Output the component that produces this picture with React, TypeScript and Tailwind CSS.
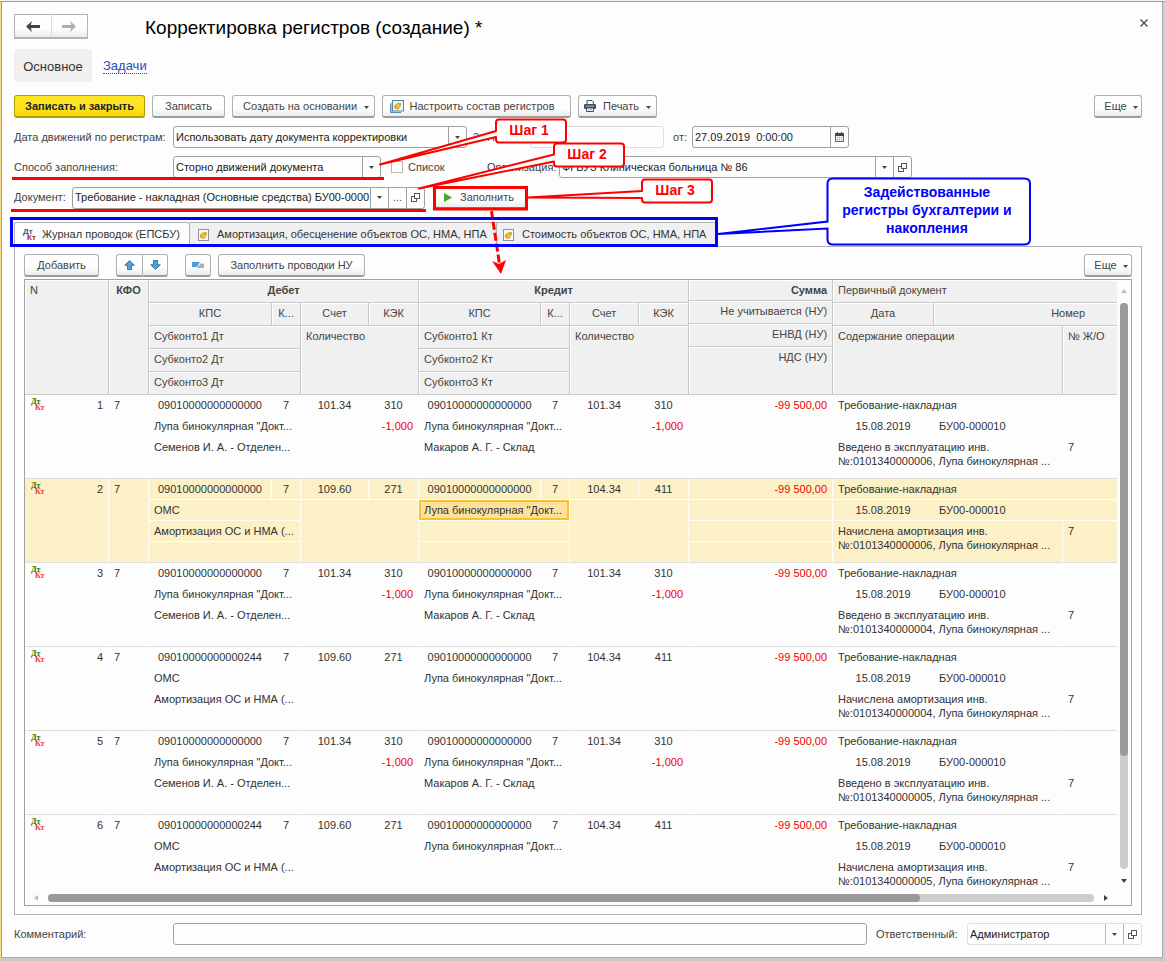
import React from "react";

type Entry = {
  n: number;
  debit: { kps: string; account: string; kek: string; sub: string[]; qty?: string };
  credit: { kps: string; account: string; kek: string; sub: string[]; qty?: string };
  content: string[];
};

const LUPA = 'Лупа бинокулярная "Докт...';

function commissioning(n: number, inv: string): Entry {
  return {
    n,
    debit: { kps: "09010000000000000", account: "101.34", kek: "310", sub: [LUPA, "Семенов И. А. - Отделен..."], qty: "-1,000" },
    credit: { kps: "09010000000000000", account: "101.34", kek: "310", sub: [LUPA, "Макаров А. Г. - Склад"], qty: "-1,000" },
    content: ["Введено в эксплуатацию инв.", `№:${inv}, Лупа бинокулярная ...`],
  };
}

function depreciation(n: number, inv: string, kps: string): Entry {
  return {
    n,
    debit: { kps, account: "109.60", kek: "271", sub: ["ОМС", "Амортизация ОС и НМА (..."] },
    credit: { kps: "09010000000000000", account: "104.34", kek: "411", sub: [LUPA, ""] },
    content: ["Начислена амортизация инв.", `№:${inv}, Лупа бинокулярная ...`],
  };
}

const entries: Entry[] = [
  commissioning(1, "0101340000006"),
  depreciation(2, "0101340000006", "09010000000000000"),
  commissioning(3, "0101340000004"),
  depreciation(4, "0101340000004", "09010000000000244"),
  commissioning(5, "0101340000005"),
  depreciation(6, "0101340000005", "09010000000000244"),
];

function Caret({ className = "" }: { className?: string }) {
  return (
    <svg aria-hidden="true" viewBox="0 0 5 3" className={`h-[3px] w-[5px] shrink-0 ${className}`}>
      <path d="M0 0H5L2.5 3Z" fill="#444" />
    </svg>
  );
}

function OpenIcon() {
  return (
    <svg aria-hidden="true" viewBox="0 0 9 9" className="h-[9px] w-[9px]" fill="none" stroke="#555" shapeRendering="crispEdges">
      <path d="M3.5 .5H8.5V5.5H3.5Z" />
      <path d="M3 3.5H.5V8.5H5.5V6" />
    </svg>
  );
}

function CalendarIcon() {
  return (
    <svg aria-hidden="true" viewBox="0 0 9 10" className="h-[10px] w-[9px]" shapeRendering="crispEdges">
      <path d="M0 1H9V10H0Z" fill="#666" />
      <path d="M2 0H3V2H2ZM6 0H7V2H6Z" fill="#444" />
      <path d="M0 1H9V4H0Z" fill="#444" />
      <path d="M1 4H8V9H1Z" fill="#f2f2f2" />
      <path d="M2 5H3V6H2ZM4 5H5V6H4ZM6 5H7V6H6ZM2 7H3V8H2ZM4 7H5V8H4ZM6 7H7V8H6Z" fill="#999" />
    </svg>
  );
}

function RegisterIcon() {
  return (
    <svg aria-hidden="true" viewBox="0 0 11 12" className="h-3 w-[11px] shrink-0">
      <rect x=".5" y=".5" width="10" height="11" fill="#f6f8fc" stroke="#8a93a5" />
      <path d="M1.8 7.2C1.8 4.6 5.4 2.4 8.4 3C9.8 4.4 8.8 6.6 7.2 7.8C8 8.6 6.6 9.9 4.8 9.7C3 9.6 1.8 8.8 1.8 7.2Z" fill="#dfa51f" />
      <path d="M3.6 6.2L6.6 4.2M4.4 8.2L7.4 6.2" stroke="#fbe48a" strokeWidth=".9" />
    </svg>
  );
}

function RegistersIcon() {
  return (
    <svg aria-hidden="true" viewBox="0 0 14 13" className="h-[13px] w-[14px] shrink-0">
      <path d="M.5 3.5V12.5H11" fill="none" stroke="#5a8fb0" />
      <path d="M1 2.5H3V12H1Z" fill="#9cc7de" />
      <rect x="2.5" y=".5" width="11" height="10.5" fill="#eaf5fc" stroke="#4f87ab" />
      <path d="M4 7C4 4.6 7.4 2.2 10.6 2.8C12 4.2 11 6.4 9.4 7.6C10.2 8.4 8.6 9.6 7 9.4C5.2 9.4 4 8.6 4 7Z" fill="#dfa51f" />
      <path d="M6 6L9 4M6.6 8L9.6 6" stroke="#fbe48a" strokeWidth=".9" />
    </svg>
  );
}

function PrinterIcon() {
  return (
    <svg aria-hidden="true" viewBox="0 0 12 12" className="h-3 w-3 shrink-0">
      <path d="M3 .5H8L9.3 1.8V5H3Z" fill="#fff" stroke="#3d5068" />
      <rect x="0" y="4" width="12" height="5" rx="1.2" fill="#3d5068" />
      <path d="M2 6.2H10" stroke="#c7d2de" strokeWidth=".8" />
      <path d="M2.5 8H9.5V11.5H2.5Z" fill="#fff" stroke="#3d5068" />
      <path d="M4 9.8H8" stroke="#8b98a8" strokeWidth=".8" />
    </svg>
  );
}

function BlueArrow({ down = false }: { down?: boolean }) {
  return (
    <svg aria-hidden="true" viewBox="0 0 11 10" className={`h-[10px] w-[11px] ${down ? "rotate-180" : ""}`}>
      <path d="M5.5 .6L10.3 5.2H7.5V9.5H3.5V5.2H.7Z" fill="#4da3e0" stroke="#2a6da3" strokeWidth=".9" />
    </svg>
  );
}

function NavArrow({ color, right = false }: { color: string; right?: boolean }) {
  return (
    <svg aria-hidden="true" viewBox="0 0 14 11" className={`h-[11px] w-[14px] ${right ? "rotate-180" : ""}`}>
      <path d="M0 5.5L6 0L4.8 4H14V7H4.8L6 11Z" fill={color} />
    </svg>
  );
}

function DtKt({ tone }: { tone: "tab" | "row" }) {
  return (
    <span className={`relative block h-[14px] w-[13px] shrink-0 text-left text-[8px] leading-[8px] font-bold ${tone === "tab" ? "font-[Liberation_Sans,sans-serif]" : "font-[Liberation_Serif,serif]"}`}>
      <span className={`absolute top-0 left-0 ${tone === "tab" ? "text-[#2c6496]" : "text-[#1a7a10]"}`}>Дт</span>
      <span className={`absolute top-[6px] left-[4px] ${tone === "tab" ? "text-[#c22020]" : "text-[#f04040]"}`}>Кт</span>
    </span>
  );
}

const buttonLook =
  "flex h-[23px] shrink-0 items-center justify-center rounded-[3px] border border-[#b0b0b0] border-b-2 border-b-[#9c9c9c] bg-linear-to-b from-[#fefefe] from-60% to-[#ececec] text-[#444] whitespace-nowrap";

function Button({ className, children, label }: { className: string; children: React.ReactNode; label?: string }) {
  return (
    <button type="button" aria-label={label} className={`${buttonLook} ${className}`}>
      {children}
    </button>
  );
}

function SideButton({ label, children, light = false }: { label: string; children: React.ReactNode; light?: boolean }) {
  return (
    <button
      type="button"
      aria-label={label}
      className={`flex w-[18px] shrink-0 items-center justify-center border-l ${light ? "border-[#b8b8b8]" : "border-[#a0a0a0]"}`}
    >
      {children}
    </button>
  );
}

const fieldLook = "flex h-[22px] shrink-0 items-stretch overflow-hidden rounded-[3px] border bg-[#fefefe] text-[#222]";

function SelectField({ id, value, className }: { id: string; value: string; className: string }) {
  return (
    <div className={`${fieldLook} relative border-[#a0a0a0] ${className}`}>
      <select id={id} className="w-full appearance-none bg-transparent pr-5 pl-[2px] outline-none">
        <option>{value}</option>
      </select>
      <span className="pointer-events-none absolute inset-y-0 right-0 flex w-[18px] items-center justify-center border-l border-[#a0a0a0]">
        <Caret />
      </span>
    </div>
  );
}

const headCell = "border-l border-b border-[#c9c9c9] bg-[#f0f0f0] p-0 px-[5px] align-top leading-5 font-normal text-[#444] shadow-[inset_1px_1px_0_#fff]";
const sumLine = "pr-[5px] shadow-[inset_1px_1px_0_#fff]";

function EntryRows({ entry, selected }: { entry: Entry; selected: boolean }) {
  const inner = selected ? "border-[#fffdf5]" : "border-transparent";
  const last = "border-b-[#dedede]";
  const cell = `h-[21px] overflow-hidden border-l border-b p-0 px-[5px] align-top leading-5 whitespace-nowrap ${inner}`;
  const { debit, credit } = entry;
  const bg = selected ? "bg-[#fcf0c6]" : "";
  return (
    <>
      <tr className={bg}>
        <td rowSpan={4} className={`${cell} ${last} border-l-transparent`}>
          <div className="flex items-start justify-between">
            <span className="pt-[3px]">
              <DtKt tone="row" />
            </span>
            <span>{entry.n}</span>
          </div>
        </td>
        <td rowSpan={4} className={`${cell} ${last}`}>7</td>
        <td className={`${cell} text-center`}>{debit.kps}</td>
        <td className={`${cell} text-center`}>7</td>
        <td className={`${cell} text-center`}>{debit.account}</td>
        <td className={`${cell} text-center`}>{debit.kek}</td>
        <td className={`${cell} text-center`}>{credit.kps}</td>
        <td className={`${cell} text-center`}>7</td>
        <td className={`${cell} text-center`}>{credit.account}</td>
        <td className={`${cell} text-center`}>{credit.kek}</td>
        <td className={`${cell} text-right text-[#f00000]`}>-99 500,00</td>
        <td colSpan={3} className={cell}>Требование-накладная</td>
      </tr>
      <tr className={bg}>
        <td colSpan={2} className={cell}>{debit.sub[0]}</td>
        <td colSpan={2} rowSpan={3} className={`${cell} ${last} text-right text-[#f00000]`}>{debit.qty}</td>
        <td
          colSpan={2}
          className={`${cell} ${selected ? "bg-[#fde19c] shadow-[inset_0_0_0_2px_#fbc22d]" : ""}`}
        >
          {credit.sub[0]}
        </td>
        <td colSpan={2} rowSpan={3} className={`${cell} ${last} text-right text-[#f00000]`}>{credit.qty}</td>
        <td className={cell} />
        <td className={`${cell} text-center`}>15.08.2019</td>
        <td colSpan={2} className={`${cell} border-l-transparent`}>БУ00-000010</td>
      </tr>
      <tr className={bg}>
        <td colSpan={2} className={cell}>{debit.sub[1]}</td>
        <td colSpan={2} className={cell}>{credit.sub[1]}</td>
        <td className={cell} />
        <td colSpan={2} rowSpan={2} className={`${cell} ${last}`}>
          <div className="pt-[3px] leading-[14px]">
            {entry.content[0]}
            <br />
            {entry.content[1]}
          </div>
        </td>
        <td rowSpan={2} className={`${cell} ${last}`}>7</td>
      </tr>
      <tr className={bg}>
        <td colSpan={2} className={`${cell} ${last}`} />
        <td colSpan={2} className={`${cell} ${last}`} />
        <td className={`${cell} ${last}`} />
      </tr>
    </>
  );
}

function PostingsTable() {
  return (
    <table className="w-full table-fixed border-separate border-spacing-0 text-[#333]">
      <colgroup>
        <col className="w-[83px]" />
        <col className="w-[40px]" />
        <col className="w-[123px]" />
        <col className="w-[29px]" />
        <col className="w-[68px]" />
        <col className="w-[50px]" />
        <col className="w-[122px]" />
        <col className="w-[29px]" />
        <col className="w-[69px]" />
        <col className="w-[50px]" />
        <col className="w-[144px]" />
        <col className="w-[101px]" />
        <col />
        <col className="w-[55px]" />
      </colgroup>
      <thead>
        <tr className="h-[23px]">
          <th rowSpan={5} className={`${headCell} border-l-0 text-left`}>N</th>
          <th rowSpan={5} className={headCell}><b>КФО</b></th>
          <th colSpan={4} className={headCell}><b>Дебет</b></th>
          <th colSpan={4} className={headCell}><b>Кредит</b></th>
          <th rowSpan={5} className="border-b border-l border-[#c9c9c9] bg-[#f0f0f0] p-0 text-right align-top leading-5 font-normal text-[#444]">
            <div className={`h-[21px] border-b border-[#c9c9c9] ${sumLine}`}><b>Сумма</b></div>
            <div className={`h-[23px] border-b border-[#c9c9c9] ${sumLine}`}>Не учитывается (НУ)</div>
            <div className={`h-[23px] border-b border-[#c9c9c9] ${sumLine}`}>ЕНВД (НУ)</div>
            <div className={`h-[47px] ${sumLine}`}>НДС (НУ)</div>
          </th>
          <th colSpan={3} className={`${headCell} text-left`}>Первичный документ</th>
        </tr>
        <tr className="h-[23px]">
          <th className={headCell}>КПС</th>
          <th className={headCell}>К...</th>
          <th className={headCell}>Счет</th>
          <th className={headCell}>КЭК</th>
          <th className={headCell}>КПС</th>
          <th className={headCell}>К...</th>
          <th className={headCell}>Счет</th>
          <th className={headCell}>КЭК</th>
          <th className={headCell}>Дата</th>
          <th colSpan={2} className={`${headCell} pr-8 text-right`}>Номер</th>
        </tr>
        <tr className="h-[23px]">
          <th colSpan={2} className={`${headCell} text-left`}>Субконто1 Дт</th>
          <th colSpan={2} rowSpan={3} className={`${headCell} text-left`}>Количество</th>
          <th colSpan={2} className={`${headCell} text-left`}>Субконто1 Кт</th>
          <th colSpan={2} rowSpan={3} className={`${headCell} text-left`}>Количество</th>
          <th colSpan={2} rowSpan={3} className={`${headCell} text-left`}>Содержание операции</th>
          <th rowSpan={3} className={`${headCell} text-left whitespace-nowrap`}>№ Ж/О</th>
        </tr>
        <tr className="h-[23px]">
          <th colSpan={2} className={`${headCell} text-left`}>Субконто2 Дт</th>
          <th colSpan={2} className={`${headCell} text-left`}>Субконто2 Кт</th>
        </tr>
        <tr className="h-[23px]">
          <th colSpan={2} className={`${headCell} text-left`}>Субконто3 Дт</th>
          <th colSpan={2} className={`${headCell} text-left`}>Субконто3 Кт</th>
        </tr>
      </thead>
      <tbody>
        {entries.map((e) => (
          <EntryRows key={e.n} entry={e} selected={e.n === 2} />
        ))}
      </tbody>
    </table>
  );
}

function Annotations() {
  const step = "absolute flex h-6 w-[72px] items-center justify-center text-[14px] leading-none font-bold text-[#f00]";
  return (
    <div className="pointer-events-none absolute top-0 left-0 h-[280px] w-[1040px]">
      <svg aria-hidden="true" viewBox="0 0 1040 280" className="absolute top-0 left-0 h-[280px] w-[1040px]">
        <g fill="none" stroke="#f00" strokeWidth="3">
          <path d="M12 178.5H384M11 210.5H426" />
          <rect x="434.500" y="187.500" width="92" height="21.500" />
          <path d="M491.500 211L499.500 264" strokeDasharray="8 3" />
        </g>
        <path d="M501 274L492 261L499 264L506 260Z" fill="#f00" />
        <rect x="11.500" y="218.500" width="705" height="27" fill="none" stroke="#00f" strokeWidth="3" />
        <g fill="#fff" stroke="#f00" strokeWidth="2" strokeLinejoin="round">
          <path d="M499 119.500H563Q566 119.500 566 122.500V139.500Q566 142.500 563 142.500H499Q496 142.500 496 139.500V137L380 164.500L496 131V122.500Q496 119.500 499 119.500Z" />
          <path d="M557 143.500H621Q624 143.500 624 146.500V163.500Q624 166.500 621 166.500H557Q554 166.500 554 163.500V161.500L419 188.500L554 154.500V146.500Q554 143.500 557 143.500Z" />
          <path d="M645 179.500H709Q712 179.500 712 182.500V199.500Q712 202.500 709 202.500H645Q642 202.500 642 199.500V198L528 197.500L642 191V182.500Q642 179.500 645 179.500Z" />
        </g>
        <path
          d="M833 178.500H1024Q1030 178.500 1030 183.500V239.500Q1030 244.500 1024 244.500H833Q827.500 244.500 827.500 239.500V228.500L718 234L827.500 221.500V183.500Q827.500 178.500 833 178.500Z"
          fill="#fff"
          stroke="#00f"
          strokeWidth="2"
        />
      </svg>
      <div className={`${step} top-[118px] left-[493px]`}>Шаг 1</div>
      <div className={`${step} top-[142px] left-[551px]`}>Шаг 2</div>
      <div className={`${step} top-[178px] left-[639px]`}>Шаг 3</div>
      <div className="absolute top-[183px] left-[826px] w-[202px] text-center text-[14px] leading-[18px] font-bold text-[#00f]">
        Задействованные
        <br />
        регистры бухгалтерии и
        <br />
        накопления
      </div>
    </div>
  );
}

export default function App() {
  return (
    <div className="relative flex h-screen min-h-[640px] min-w-[1100px] flex-col overflow-hidden bg-[#fdfdfd] font-[Liberation_Sans,Arial,sans-serif] text-[11px] text-[#444]">
      <div className="flex h-[2px] shrink-0 border-b border-[#9a9a9a] bg-[#f2f2f2]" />
      <div className="flex min-h-0 flex-1">
        <div className="w-[2px] shrink-0 border-r border-[#b39b55] bg-[#fbdc8c]" />
        <main className="flex min-w-0 flex-1 flex-col border-r border-b border-[#a8a8a8] pt-3 pr-5 pb-3 pl-3">
          <header className="flex h-[25px] shrink-0 items-center">
            <div className="flex h-[25px] w-[74px] shrink-0 border border-b-2 border-[#b4b4b4] bg-linear-to-b from-[#fefefe] from-60% to-[#ececec]">
              <button type="button" aria-label="Назад" className="flex flex-1 items-center justify-center border-r border-[#dcdcdc]">
                <NavArrow color="#444" />
              </button>
              <button type="button" aria-label="Вперед" className="flex flex-1 items-center justify-center">
                <NavArrow color="#adadad" right />
              </button>
            </div>
            <h1 className="ml-[57px] pt-[2px] text-[19px] leading-6 text-black">Корректировка регистров (создание) *</h1>
            <button type="button" aria-label="Закрыть" className="-mr-[10px] mb-2 ml-auto flex h-4 w-4 items-center justify-center">
              <svg aria-hidden="true" viewBox="0 0 8 8" className="h-2 w-2" stroke="#444" strokeWidth="1.2">
                <path d="M.5 .5L7.500 7.500M7.500 .5L.5 7.500" />
              </svg>
            </button>
          </header>

          <nav className="mt-[10px] flex h-[33px] shrink-0 items-stretch gap-[11px] text-[13px]">
            <a href="#main" className="flex w-[78px] items-center justify-center rounded-[4px] bg-[#f0f0f0] pt-[2px] text-[#333]">Основное</a>
            <a href="#tasks" className="flex items-center pt-[2px] text-[#2250b8]">
              <span className="border-b border-dotted border-[#2250b8] leading-[14px]">Задачи</span>
            </a>
          </nav>

          <div className="mt-[13px] flex shrink-0 gap-[7px]">
            <button type="button" className="h-[23px] w-[131px] rounded-[3px] border border-b-2 border-[#b39c00] bg-linear-to-b from-[#ffe423] from-50% to-[#f5d800] font-bold whitespace-nowrap text-[#222]">
              Записать и закрыть
            </button>
            <Button className="w-[73px]">Записать</Button>
            <Button className="w-[143px] gap-[7px] pl-[5px]">Создать на основании<Caret className="mt-[3px]" /></Button>
            <Button className="w-[189px] gap-[6px] pr-[9px]"><RegistersIcon />Настроить состав регистров</Button>
            <Button className="w-[79px] gap-[7px]"><PrinterIcon />Печать<Caret className="mt-[3px]" /></Button>
            <Button className="ml-auto w-[48px] gap-[6px] pl-[6px]">Еще<Caret className="mt-[3px]" /></Button>
          </div>

          <div className="mt-2 flex shrink-0 items-center">
            <label htmlFor="date-mode" className="w-[159px] shrink-0">Дата движений по регистрам:</label>
            <SelectField id="date-mode" value="Использовать дату документа корректировки" className="w-[294px]" />
            <button type="button" aria-label="Подсказка" className="ml-[5px] w-2 text-[#2b7bb5]">?</button>
            <label htmlFor="number" className="ml-[7px] w-[43px]">Номер:</label>
            <input id="number" className="h-[22px] w-[134px] rounded-[3px] border border-[#dedede] bg-[#fefefe] px-[3px]" />
            <label htmlFor="date" className="ml-[9px] w-[19px]">от:</label>
            <div className={`${fieldLook} w-[157px] border-[#a0a0a0]`}>
              <input id="date" defaultValue="27.09.2019  0:00:00" className="min-w-0 flex-1 bg-transparent pl-[2px] whitespace-pre outline-none" />
              <SideButton label="Выбрать дату"><CalendarIcon /></SideButton>
            </div>
          </div>

          <div className="mt-2 flex shrink-0 items-center">
            <label htmlFor="fill-mode" className="w-[159px] shrink-0">Способ заполнения:</label>
            <SelectField id="fill-mode" value="Сторно движений документа" className="w-[208px]" />
            <input id="list" type="checkbox" className="ml-[10px] h-3 w-3 shrink-0 appearance-none border border-[#b8b8b8] bg-white checked:bg-[#555]" />
            <label htmlFor="list" className="ml-[5px] w-[79px]">Список</label>
            <label htmlFor="org" className="w-[72px]">Организация:</label>
            <div className={`${fieldLook} w-[353px] border-[#a0a0a0]`}>
              <input id="org" defaultValue="ФГБУЗ Клиническая больница № 86" className="min-w-0 flex-1 bg-transparent pl-[2px] outline-none" />
              <SideButton label="Выбрать организацию"><Caret /></SideButton>
              <SideButton label="Открыть организацию"><OpenIcon /></SideButton>
            </div>
          </div>

          <div className="mt-2 flex shrink-0 items-center">
            <label htmlFor="document" className="w-[58px] shrink-0">Документ:</label>
            <div className={`${fieldLook} w-[353px] border-[#a0a0a0]`}>
              <input id="document" defaultValue="Требование - накладная (Основные средства) БУ00-000010" className="min-w-0 flex-1 bg-transparent pl-[2px] outline-none" />
              <SideButton label="Показать список"><Caret /></SideButton>
              <SideButton label="Выбрать документ"><span className="text-[#555]">...</span></SideButton>
              <SideButton label="Открыть документ"><OpenIcon /></SideButton>
            </div>
            <Button className="ml-[10px] h-[22px] w-[92px] gap-2 pr-1">
              <svg aria-hidden="true" viewBox="0 0 8 9" className="h-[9px] w-2"><path d="M0 0L8 4.500L0 9Z" fill="#3fae1e" /></svg>
              Заполнить
            </Button>
          </div>

          <div role="tablist" className="mt-[13px] flex h-[24px] shrink-0 text-[#333]">
            <button type="button" role="tab" aria-selected="true" className="flex w-[176px] items-center gap-[6px] rounded-t-[3px] border border-b-0 border-[#b0b0b0] bg-[#fdfdfd] pl-2 whitespace-nowrap">
              <DtKt tone="tab" />Журнал проводок (ЕПСБУ)
            </button>
            <button type="button" role="tab" aria-selected="false" className="flex w-[306px] items-center gap-2 border-t border-[#b0b0b0] bg-[#f0f0f0] pl-2 whitespace-nowrap">
              <RegisterIcon />Амортизация, обесценение объектов ОС, НМА, НПА
            </button>
            <button type="button" role="tab" aria-selected="false" className="flex w-[220px] items-center gap-2 rounded-tr-[3px] border-t border-l border-[#b0b0b0] bg-[#f0f0f0] pl-[6px] whitespace-nowrap">
              <RegisterIcon />Стоимость объектов ОС, НМА, НПА
            </button>
          </div>

          <section className="flex min-h-0 flex-1 flex-col border border-[#b0b0b0] px-[9px] pt-[7px] pb-2">
            <div className="flex shrink-0">
              <Button className="w-[75px]">Добавить</Button>
              <Button className="ml-[17px] w-[26px] rounded-r-none border-r-0" label="Переместить вверх"><BlueArrow /></Button>
              <Button className="w-[26px] rounded-l-none" label="Переместить вниз"><BlueArrow down /></Button>
              <Button className="ml-[17px] w-[26px]" label="Активность проводок">
                <svg aria-hidden="true" viewBox="0 0 12 6" className="h-[6px] w-3">
                  <path d="M0 0H8L5 5H0Z" fill="#4c9bdb" />
                  <path d="M5 6L8.500 1.500H12V6Z" fill="#b0b0b0" />
                </svg>
              </Button>
              <Button className="ml-[7px] w-[147px]">Заполнить проводки НУ</Button>
              <Button className="ml-auto w-[48px] gap-[6px] pl-[6px]">Еще<Caret className="mt-[3px]" /></Button>
            </div>

            <div className="mt-[2px] flex min-h-0 flex-1 flex-col border border-[#a0a0a0]">
              <div className="flex min-h-0 flex-1">
                <div className="min-w-0 flex-1 overflow-hidden">
                  <PostingsTable />
                </div>
                <div className="flex w-[14px] shrink-0 flex-col items-center pt-[9px] pb-2">
                  <svg aria-hidden="true" viewBox="0 0 6 4" className="h-1 w-[6px]"><path d="M0 4H6L3 0Z" fill="#bbb" /></svg>
                  <div className="mt-[10px] mb-[10px] w-2 flex-1 rounded-full bg-[#cdcdcd]">
                    <div className="h-4/5 rounded-full bg-[#999]" />
                  </div>
                  <svg aria-hidden="true" viewBox="0 0 6 4" className="h-1 w-[6px]"><path d="M0 0H6L3 4Z" fill="#444" /></svg>
                </div>
              </div>
              <div className="flex h-[14px] shrink-0 items-center pr-[23px] pl-[9px]">
                <svg aria-hidden="true" viewBox="0 0 4 6" className="h-[6px] w-1"><path d="M4 0V6L0 3Z" fill="#bbb" /></svg>
                <div className="mr-[10px] ml-[10px] h-2 flex-1 rounded-full bg-[#cdcdcd]">
                  <div className="h-2 w-5/6 rounded-full bg-[#999]" />
                </div>
                <svg aria-hidden="true" viewBox="0 0 4 6" className="h-[6px] w-1"><path d="M0 0V6L4 3Z" fill="#444" /></svg>
              </div>
            </div>
          </section>

          <footer className="mt-2 flex shrink-0 items-center">
            <label htmlFor="comment" className="w-[159px] shrink-0">Комментарий:</label>
            <input id="comment" className="h-[22px] min-w-0 flex-1 rounded-[3px] border border-[#a0a0a0] bg-[#fefefe] px-[3px]" />
            <label htmlFor="responsible" className="ml-[9px] w-[91px]">Ответственный:</label>
            <div className={`${fieldLook} w-[175px] border-[#dedede]`}>
              <input id="responsible" defaultValue="Администратор" className="min-w-0 flex-1 bg-transparent pl-[2px] outline-none" />
              <SideButton label="Выбрать ответственного" light><Caret /></SideButton>
              <SideButton label="Открыть ответственного" light><OpenIcon /></SideButton>
            </div>
          </footer>
        </main>
        <div className="w-[2px] shrink-0 bg-[#d0d0d0]" />
      </div>
      <div className="h-[3px] shrink-0 bg-[#c8c8c8]" />
      <Annotations />
    </div>
  );
}
